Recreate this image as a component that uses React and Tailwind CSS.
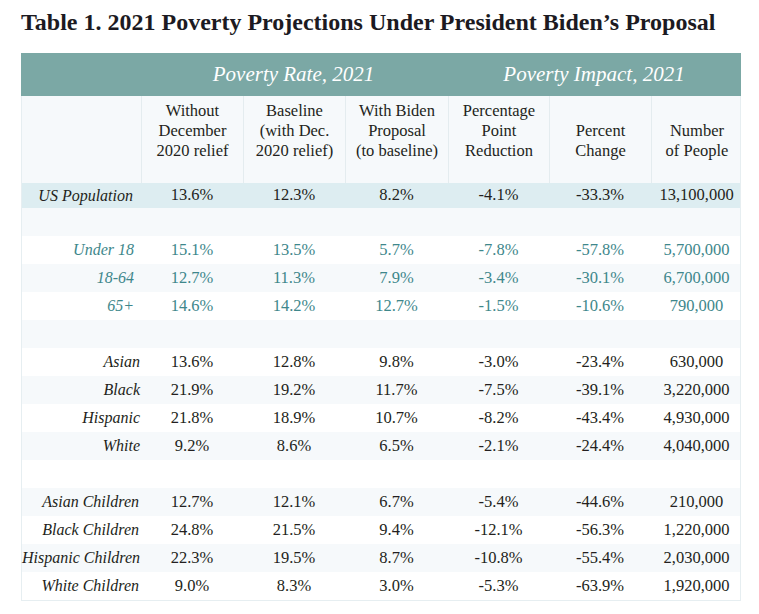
const cols = "grid grid-cols-[119px_102px_102px_103px_101px_102px_91px]";

const ageRows = [
  ["Under 18", "15.1%", "13.5%", "5.7%", "-7.8%", "-57.8%", "5,700,000"],
  ["18-64", "12.7%", "11.3%", "7.9%", "-3.4%", "-30.1%", "6,700,000"],
  ["65+", "14.6%", "14.2%", "12.7%", "-1.5%", "-10.6%", "790,000"],
];

const raceRows = [
  ["Asian", "13.6%", "12.8%", "9.8%", "-3.0%", "-23.4%", "630,000"],
  ["Black", "21.9%", "19.2%", "11.7%", "-7.5%", "-39.1%", "3,220,000"],
  ["Hispanic", "21.8%", "18.9%", "10.7%", "-8.2%", "-43.4%", "4,930,000"],
  ["White", "9.2%", "8.6%", "6.5%", "-2.1%", "-24.4%", "4,040,000"],
];

const childRows = [
  ["Asian Children", "12.7%", "12.1%", "6.7%", "-5.4%", "-44.6%", "210,000"],
  ["Black Children", "24.8%", "21.5%", "9.4%", "-12.1%", "-56.3%", "1,220,000"],
  ["Hispanic Children", "22.3%", "19.5%", "8.7%", "-10.8%", "-55.4%", "2,030,000"],
  ["White Children", "9.0%", "8.3%", "3.0%", "-5.3%", "-63.9%", "1,920,000"],
];

function Row({ cells, bg, color, pad, h = "h-[28px]" }) {
  return (
    <div className={`${cols} ${h} ${bg} ${color} items-center text-[16.5px]`}>
      <div className={`text-right italic text-[16px] whitespace-nowrap ${pad}`}>{cells[0]}</div>
      {cells.slice(1).map((c, i) => (
        <div key={i} className="text-center">
          {c}
        </div>
      ))}
    </div>
  );
}

function Spacer({ bg }) {
  return <div className={`h-[28px] ${bg}`} />;
}

export default function App() {
  const light = "bg-[#f6f9fb]";
  const white = "bg-white";
  const dark = "text-[#231f20]";
  const teal = "text-[#3e878b]";

  return (
    <div className="w-[759px] h-[614px] bg-white font-['Liberation_Serif',serif] text-[#231f20]">
      <h1 className="pl-[21px] pt-[7px] text-[24px] leading-[30px] font-bold text-[#1c1a22]">
        Table 1. 2021 Poverty Projections Under President Biden’s Proposal
      </h1>

      <div className="ml-[21px] mt-[16px] w-[720px]">
        <div className="grid grid-cols-[119px_307px_294px] h-[43px] bg-[#7ba8a5] text-white italic text-[21px] items-center">
          <div />
          <div className="text-center">Poverty Rate, 2021</div>
          <div className="text-center">Poverty Impact, 2021</div>
        </div>

        <div className="border-x border-b border-[#e6eef1]">
          <div className={`${cols} h-[87px] ${light} text-[16.5px] leading-[20px]`}>
            <div />
            {[
              ["Without", "December", "2020 relief"],
              ["Baseline", "(with Dec.", "2020 relief)"],
              ["With Biden", "Proposal", "(to baseline)"],
              ["Percentage", "Point", "Reduction"],
              ["Percent", "Change"],
              ["Number", "of People"],
            ].map((lines, i) => (
              <div
                key={i}
                className="border-l border-[#e4ecef] flex flex-col items-center justify-end pb-[22px] text-center whitespace-nowrap"
              >
                {lines.map((l) => (
                  <span key={l}>{l}</span>
                ))}
              </div>
            ))}
          </div>

          <Row
            cells={["US Population", "13.6%", "12.3%", "8.2%", "-4.1%", "-33.3%", "13,100,000"]}
            bg="bg-[#ddedf1]"
            color={dark}
            pad="pr-[8px]"
            h="h-[25px]"
          />
          <Spacer bg={light} />
          {ageRows.map((r, i) => (
            <Row key={r[0]} cells={r} bg={i % 2 ? light : white} color={teal} pad="pr-[7px]" />
          ))}
          <Spacer bg={light} />
          {raceRows.map((r, i) => (
            <Row key={r[0]} cells={r} bg={i % 2 ? light : white} color={dark} pad="pr-[1px]" />
          ))}
          <Spacer bg={white} />
          {childRows.map((r, i) => (
            <Row key={r[0]} cells={r} bg={i % 2 ? white : light} color={dark} pad="pr-[2px]" />
          ))}
        </div>
      </div>
    </div>
  );
}
